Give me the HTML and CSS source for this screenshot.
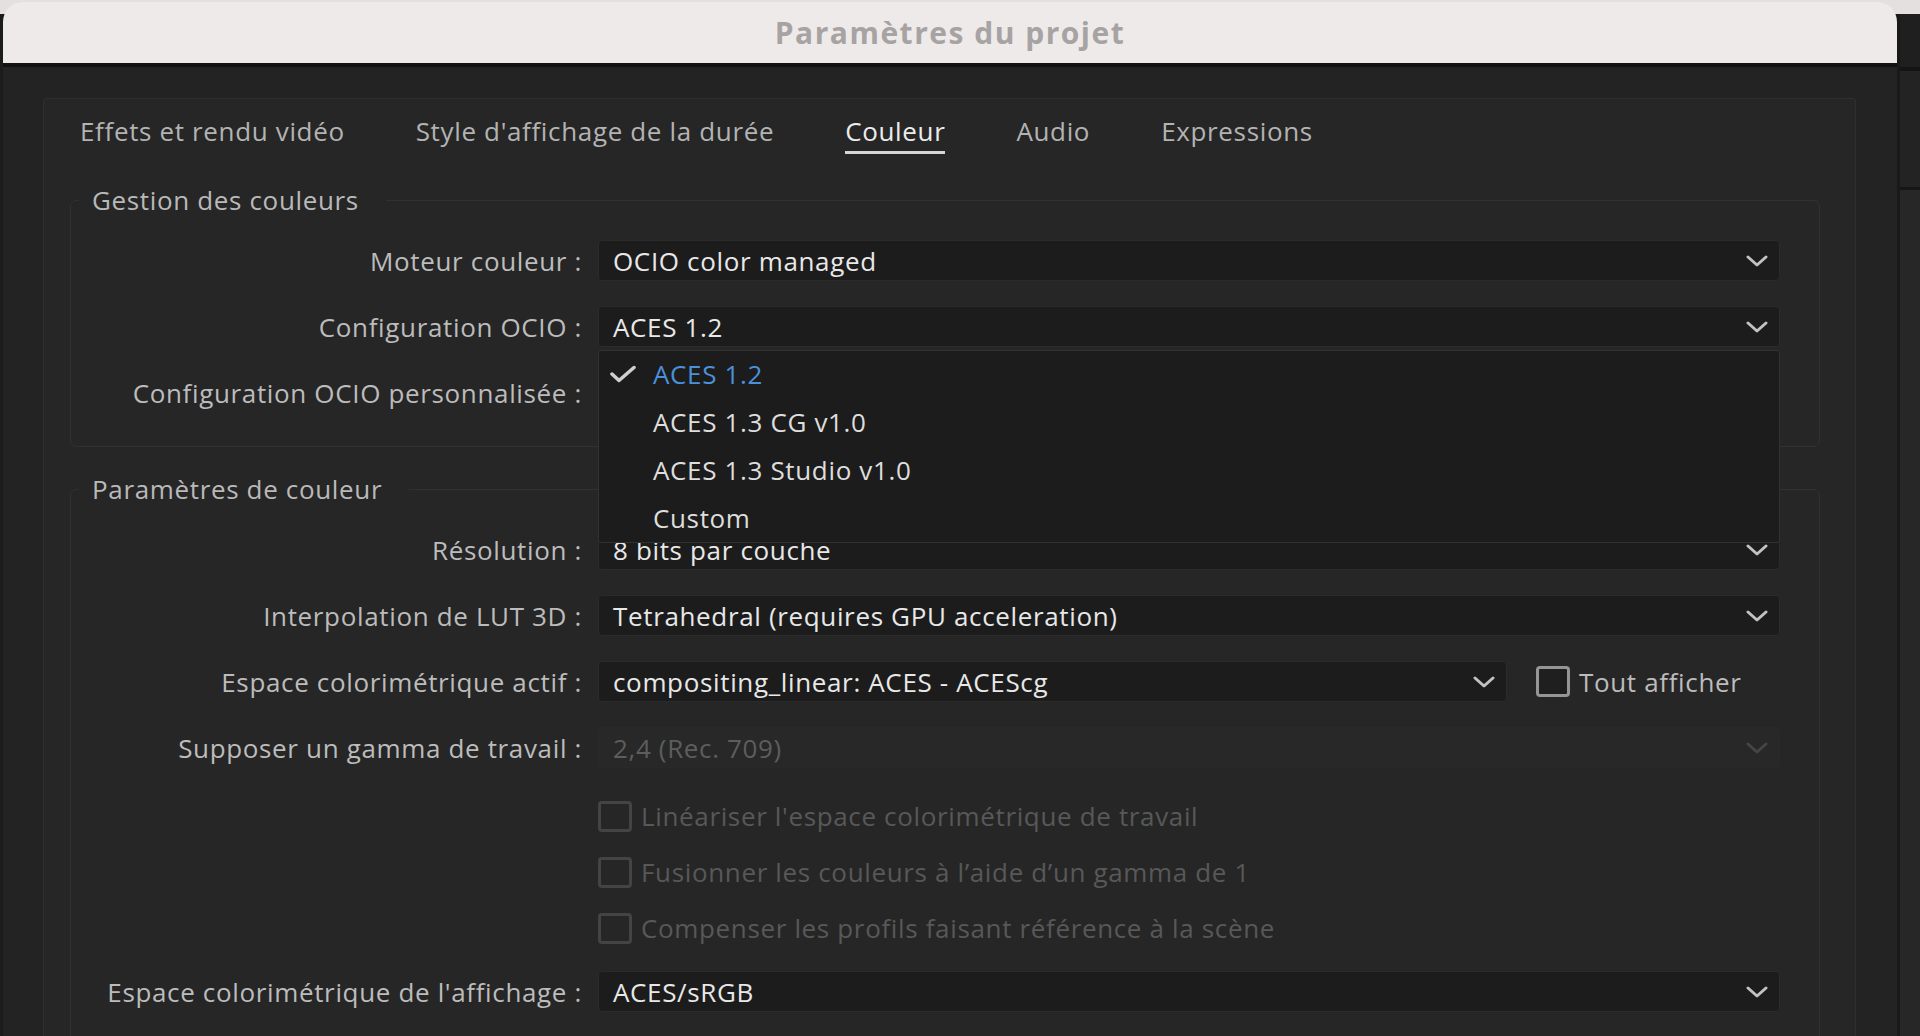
FILE: index.html
```html
<!DOCTYPE html>
<html lang="fr">
<head>
<meta charset="UTF-8">
<meta name="viewport" content="width=device-width, initial-scale=1.0">
<title>Paramètres du projet</title>
<link rel="stylesheet" href="styles.css">
</head>
<body>
<div class="dialog">
    <div class="titlebar">Paramètres du projet</div>
    <div class="dialog-body">
        <div class="panel">
            <div class="tabs">
                <span class="tab">Effets et rendu vidéo</span>
                <span class="tab">Style d'affichage de la durée</span>
                <span class="tab active">Couleur</span>
                <span class="tab">Audio</span>
                <span class="tab">Expressions</span>
            </div>

            <!-- Gestion des couleurs -->
            <fieldset class="group">
                <legend>Gestion des couleurs</legend>
                <div class="rows">
                    <div class="row">
                        <label>Moteur couleur :</label>
                        <div class="select">
                            <span>OCIO color managed</span>
                            <svg class="chevron" viewBox="0 0 22 12"><path d="M2 2 L11 10 L20 2"/></svg>
                        </div>
                    </div>
                    <div class="row">
                        <label>Configuration OCIO :</label>
                        <div class="select-wrap">
                            <div class="select">
                                <span>ACES 1.2</span>
                                <svg class="chevron" viewBox="0 0 22 12"><path d="M2 2 L11 10 L20 2"/></svg>
                            </div>
                            <ul class="menu">
                                <li class="selected">
                                    <svg class="check" viewBox="0 0 26 18"><path d="M2 9 L9 15.5 L24 2.5"/></svg>
                                    <span>ACES 1.2</span>
                                </li>
                                <li>ACES 1.3 CG v1.0</li>
                                <li>ACES 1.3 Studio v1.0</li>
                                <li>Custom</li>
                            </ul>
                        </div>
                    </div>
                    <div class="row">
                        <label>Configuration OCIO personnalisée :</label>
                        <div class="select"></div>
                    </div>
                </div>
            </fieldset>

            <!-- Paramètres de couleur -->
            <fieldset class="group">
                <legend>Paramètres de couleur</legend>
                <div class="rows">
                    <div class="row">
                        <label>Résolution :</label>
                        <div class="select">
                            <span>8 bits par couche</span>
                            <svg class="chevron" viewBox="0 0 22 12"><path d="M2 2 L11 10 L20 2"/></svg>
                        </div>
                    </div>
                    <div class="row">
                        <label>Interpolation de LUT 3D :</label>
                        <div class="select">
                            <span>Tetrahedral (requires GPU acceleration)</span>
                            <svg class="chevron" viewBox="0 0 22 12"><path d="M2 2 L11 10 L20 2"/></svg>
                        </div>
                    </div>
                    <div class="row">
                        <label>Espace colorimétrique actif :</label>
                        <div class="inline">
                            <div class="select short">
                                <span>compositing_linear: ACES - ACEScg</span>
                                <svg class="chevron" viewBox="0 0 22 12"><path d="M2 2 L11 10 L20 2"/></svg>
                            </div>
                            <div class="checkbox">
                                <span class="box"></span>
                                <span>Tout afficher</span>
                            </div>
                        </div>
                    </div>
                    <div class="row">
                        <label>Supposer un gamma de travail :</label>
                        <div class="select disabled">
                            <span>2,4 (Rec. 709)</span>
                            <svg class="chevron" viewBox="0 0 22 12"><path d="M2 2 L11 10 L20 2"/></svg>
                        </div>
                    </div>
                    <div class="checks">
                        <div class="row check-row">
                            <span></span>
                            <div class="checkbox disabled"><span class="box"></span><span>Linéariser l'espace colorimétrique de travail</span></div>
                        </div>
                        <div class="row check-row">
                            <span></span>
                            <div class="checkbox disabled"><span class="box"></span><span>Fusionner les couleurs à l’aide d’un gamma de 1</span></div>
                        </div>
                        <div class="row check-row">
                            <span></span>
                            <div class="checkbox disabled"><span class="box"></span><span>Compenser les profils faisant référence à la scène</span></div>
                        </div>
                    </div>
                    <div class="row">
                        <label>Espace colorimétrique de l'affichage :</label>
                        <div class="select">
                            <span>ACES/sRGB</span>
                            <svg class="chevron" viewBox="0 0 22 12"><path d="M2 2 L11 10 L20 2"/></svg>
                        </div>
                    </div>
                </div>
            </fieldset>
        </div>
    </div>
</div>
<div class="side">
    <div class="side-top"></div>
    <div class="side-mid"></div>
    <div class="side-rest"></div>
</div>
</body>
</html>
```

FILE: styles.css
```css
html, body {
    margin: 0;
    padding: 0;
    height: 1036px;
    overflow: hidden;
}
body {
    display: flex;
    font-family: "Open Sans", "Noto Sans", sans-serif;
    font-size: 26px;
    font-weight: 500;
    letter-spacing: 0.65px;
    background: linear-gradient(to bottom, #e4e0e0 0, #e4e0e0 14px, #1c1c1c 14px);
}
.dialog {
    width: 1894px;
    margin: 2px 0 0 3px;
    display: flex;
    flex-direction: column;
    height: 1034px;
    overflow: hidden;
}
.titlebar {
    height: 61px;
    line-height: 61px;
    background-color: #eeeaea;
    border-radius: 20px 20px 0 0;
    border-bottom: 4px solid #121212;
    text-align: center;
    font-weight: 700;
    font-size: 30px;
    letter-spacing: 1.5px;
    color: #a7a3a3;
}
.dialog-body {
    flex: 1;
    background-color: #232323;
    padding: 31px 41px 0 40px;
    display: flex;
    flex-direction: column;
}
.panel {
    flex: 1;
    background-color: #262626;
    border: 1px solid #2f2f2f;
    border-bottom: none;
    border-radius: 3px 3px 0 0;
    padding: 17px 35px 0 26px;
}
.tabs {
    display: flex;
    gap: 71px;
    margin-left: 10px;
}
.tab {
    line-height: 30px;
    padding-bottom: 5px;
    border-bottom: 3px solid transparent;
    color: #b3b3b3;
}
.tab.active {
    color: #ececec;
    border-bottom-color: #d6d6d6;
}

/* group boxes */
.group {
    margin: 32px 0 0 0;
    border: 1px solid #313131;
    border-radius: 6px;
    padding: 0 39px 33px 0;
    min-width: 0;
}
.group + .group {
    margin-top: 28px;
}
.group legend {
    margin-left: 8px;
    padding: 0 27px 0 13px;
    line-height: 28px;
    color: #b9b9b9;
}
.rows {
    display: flex;
    flex-direction: column;
    gap: 25px;
    margin-top: 26px;
}
.row {
    display: grid;
    grid-template-columns: 511px 1fr;
    column-gap: 16px;
    align-items: center;
    height: 41px;
}
.row label {
    text-align: right;
    color: #bcbcbc;
    white-space: nowrap;
}

/* selects */
.select {
    height: 41px;
    box-sizing: border-box;
    background-color: #1c1c1c;
    border: 1px solid #2b2b2b;
    border-radius: 4px;
    display: flex;
    align-items: center;
    justify-content: space-between;
    padding: 0 11px 0 14px;
    color: #e8e8e8;
    white-space: nowrap;
}
.chevron {
    width: 22px;
    height: 12px;
    fill: none;
    stroke: #c2c2c2;
    stroke-width: 3;
    stroke-linecap: round;
    stroke-linejoin: round;
}
.select.disabled {
    background-color: #282828;
    border-color: #292929;
    color: #5d5d5d;
}
.select.disabled .chevron {
    stroke: #454545;
}
.select-wrap {
    position: relative;
}
.menu {
    position: absolute;
    top: 44px;
    left: 0;
    right: 0;
    z-index: 10;
    margin: 0;
    padding: 0;
    list-style: none;
    height: 193px;
    box-sizing: border-box;
    background-color: #1c1c1c;
    border: 1px solid #323232;
    border-radius: 3px;
}
.menu li {
    height: 48px;
    margin-top: -1px;
    margin-bottom: 1px;
    display: flex;
    align-items: center;
    padding-left: 54px;
    color: #dedede;
}
.menu li.selected {
    padding-left: 11px;
    color: #4b90db;
}
.check {
    width: 26px;
    height: 18px;
    margin-right: 17px;
    fill: none;
    stroke: #cfcfcf;
    stroke-width: 3.5;
    stroke-linecap: round;
    stroke-linejoin: round;
}

/* checkboxes */
.inline {
    display: flex;
    align-items: center;
}
.select.short {
    width: 909px;
}
.checkbox {
    display: flex;
    align-items: center;
    gap: 9px;
    color: #bcbcbc;
    white-space: nowrap;
}
.inline .checkbox {
    margin-left: 29px;
}
.box {
    width: 34px;
    height: 31px;
    box-sizing: border-box;
    border: 3px solid #959595;
    border-radius: 4px;
    background-color: #1f1f1f;
}
.checkbox.disabled {
    color: #585858;
}
.checkbox.disabled .box {
    border-color: #444444;
    background-color: transparent;
}
.checks {
    display: flex;
    flex-direction: column;
    gap: 25px;
    padding: 5px 0;
}
.check-row {
    height: 31px;
}

/* right edge of the window behind */
.side {
    flex: 1;
    margin-top: 14px;
    border-left: 3px solid #191919;
    display: flex;
    flex-direction: column;
}
.side-top {
    height: 53px;
    background-color: #1f1f1f;
    border-bottom: 4px solid #141414;
}
.side-mid {
    height: 116px;
    background-color: #232323;
    border-bottom: 3px solid #161616;
}
.side-rest {
    flex: 1;
    background-color: #272727;
}
```
